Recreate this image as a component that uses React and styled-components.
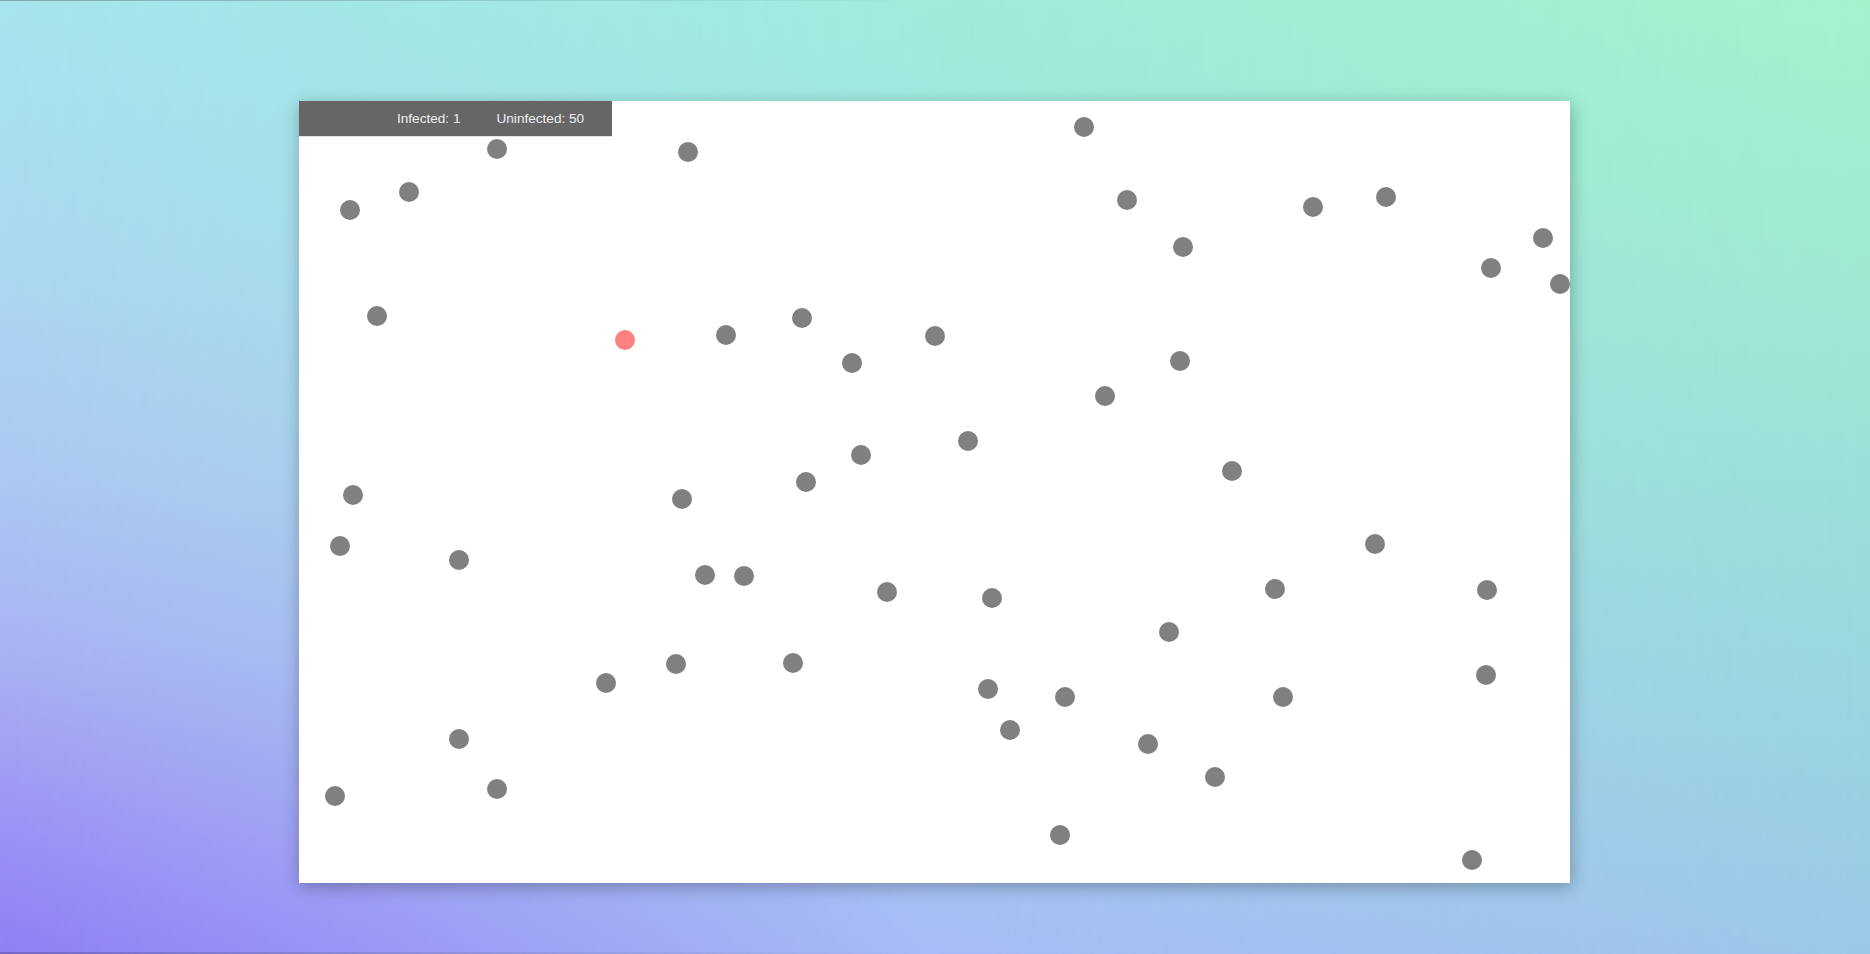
import styled, { createGlobalStyle } from 'styled-components';

const GlobalCss = createGlobalStyle`
  * {
    margin: 0;
    padding: 0;
    box-sizing: border-box;
  }

  html, body {
    height: 100%;
    overflow: hidden;
  }

  body {
    font-family: "Liberation Sans", Arial, sans-serif;
  }
`;

// infected person is flagged, everybody else is gray
const people = [
  [197, 47], [388, 50], [784, 25], [50, 108], [109, 90], [827, 98],
  [1013, 105], [1086, 95], [883, 145], [1243, 136], [1191, 166], [1260, 182],
  [77, 214], [325, 238, true], [426, 233], [502, 216], [552, 261], [635, 234],
  [880, 259], [805, 294], [561, 353], [668, 339], [53, 393], [382, 397],
  [506, 380], [932, 369], [40, 444], [159, 458], [1075, 442], [405, 473],
  [444, 474], [587, 490], [692, 496], [975, 487], [1187, 488], [869, 530],
  [306, 581], [376, 562], [493, 561], [688, 587], [765, 595], [983, 595],
  [1186, 573], [710, 628], [159, 637], [848, 642], [915, 675], [35, 694],
  [197, 687], [760, 733], [1172, 758],
];

const Page = styled.div`
  position: relative;
  height: 100vh;
  padding-top: 101px;
  background: linear-gradient(to bottom, #a8e4ee 0%, #abd8f1 28%, #adc8f2 50%, #a9b3f3 68%, #9c94f4 86%, #8f7ff5 100%);
  box-shadow: inset 0 1px 0 rgba(0, 0, 0, 0.25), inset 0 -2px 0 rgba(0, 0, 0, 0.18);

  &::before,
  &::after {
    content: '';
    position: absolute;
    inset: 0;
    pointer-events: none;
  }

  &::before {
    background: linear-gradient(to bottom, #9eecdc 0%, #a0e0e3 45%, #a6c8f2 85%, #a8bcf5 100%);
    -webkit-mask-image: linear-gradient(to right, transparent 0%, black 50%, black 100%);
    mask-image: linear-gradient(to right, transparent 0%, black 50%, black 100%);
  }

  &::after {
    background: linear-gradient(to bottom, #a2f3cc 0%, #9fead2 25%, #9be0d8 50%, #9bd4e0 75%, #9bc8e8 100%);
    -webkit-mask-image: linear-gradient(to right, transparent 50%, black 100%);
    mask-image: linear-gradient(to right, transparent 50%, black 100%);
  }
`;

const Canvas = styled.div`
  position: relative;
  z-index: 1;
  width: 1271px;
  height: 782px;
  margin-left: calc(50% - 636px);
  background: #ffffff;
  box-shadow: 1px 4px 16px rgba(0, 0, 0, 0.28);
  overflow: hidden;
`;

const StatsBar = styled.div`
  position: absolute;
  top: 0;
  left: 0;
  z-index: 2;
  display: flex;
  align-items: center;
  gap: 36px;
  width: 313px;
  height: 36px;
  padding-left: 98px;
  background: #666666;
  border-bottom: 1px solid #e2e2e2;
  color: #eeeeee;
  font-size: 13.6px;
`;

const Stat = styled.span`
  white-space: nowrap;
`;

const Person = styled.div.attrs(({ $x, $y }) => ({
  style: { left: `${$x - 9}px`, top: `${$y - 9}px` },
}))`
  position: absolute;
  width: 20px;
  height: 20px;
  border-radius: 50%;
  background: ${({ $infected }) => ($infected ? '#ff8080' : '#808080')};
`;

export default function App() {
  const infected = people.filter((p) => p[2]).length;
  return (
    <>
      <GlobalCss />
      <Page>
        <Canvas>
          <StatsBar>
            <Stat>Infected: {infected}</Stat>
            <Stat>Uninfected: {people.length - infected}</Stat>
          </StatsBar>
          {people.map(([x, y, sick], i) => (
            <Person key={i} $x={x} $y={y} $infected={!!sick} />
          ))}
        </Canvas>
      </Page>
    </>
  );
}
